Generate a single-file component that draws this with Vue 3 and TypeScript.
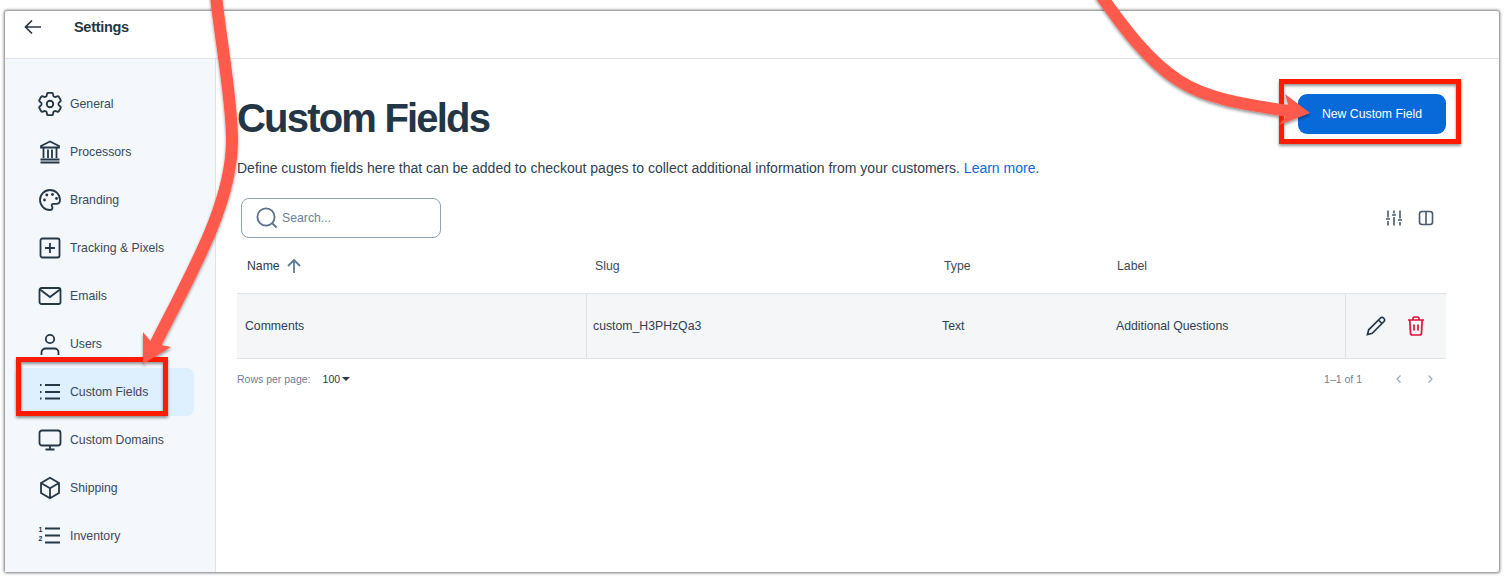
<template>
  <div class="page">
    <div class="window">
      <header class="topbar">
        <svg class="back-icon" viewBox="0 0 24 24" width="24" height="24">
          <path d="M20 12H5M11 5.500 4.500 12l6.500 6.500" />
        </svg>
        <span class="topbar-title">Settings</span>
      </header>

      <div class="body">
        <!-- sidebar -->
        <aside class="sidebar">
          <a
            v-for="item in navItems"
            :key="item.label"
            class="nav-item"
            :class="{ active: item.label === 'Custom Fields' }"
          >
            <svg class="nav-icon" viewBox="0 0 24 24" width="24" height="24" v-html="item.icon"></svg>
            <span>{{ item.label }}</span>
          </a>
        </aside>

        <!-- main -->
        <main class="content">
          <div class="title-row">
            <h1>Custom Fields</h1>
            <button class="primary-btn">New Custom Field</button>
          </div>
          <p class="intro">
            Define custom fields here that can be added to checkout pages to collect additional information from your customers.
            <a class="link">Learn more</a>.
          </p>

          <div class="toolbar">
            <div class="search">
              <svg viewBox="0 0 24 24" width="24" height="24">
                <circle cx="11" cy="11" r="8.600" />
                <path d="m17.500 17.500 4 4" />
              </svg>
              <span>Search...</span>
            </div>
            <div class="tools">
              <svg viewBox="0 0 18 18" width="18" height="18">
                <path d="M3 1.500v7M3 12v4.500M9 1.500v3M9 8v8.500M15 1.500v8M15 13v3.500M1 10h4M7 6h4M13 11h4" />
              </svg>
              <svg viewBox="0 0 18 18" width="18" height="18">
                <rect x="2.500" y="2.500" width="13" height="13" rx="2.500" />
                <path d="M9 2.500v13" />
              </svg>
            </div>
          </div>

          <div class="grid head">
            <div class="th sorted">
              Name
              <svg viewBox="0 0 16 16" width="16" height="16"><path d="M8 15V2M2 8l6-6 6 6" /></svg>
            </div>
            <div class="th slug">Slug</div>
            <div class="th">Type</div>
            <div class="th label">Label</div>
            <div></div>
          </div>

          <div v-for="row in rows" :key="row.slug" class="grid row">
            <div class="td">{{ row.name }}</div>
            <div class="td bordered">{{ row.slug }}</div>
            <div class="td">{{ row.type }}</div>
            <div class="td">{{ row.label }}</div>
            <div class="td actions">
              <svg class="edit" viewBox="0 0 24 24" width="24" height="24">
                <path d="M3.500 20.500 4.700 15.800 16.500 4a2.100 2.100 0 0 1 3 0l.5.5a2.100 2.100 0 0 1 0 3L8.200 19.300l-4.700 1.200ZM14.500 6l3.500 3.500" />
              </svg>
              <svg class="trash" viewBox="0 0 24 24" width="24" height="24">
                <path d="M4 6h16M9 6V4.500A1.500 1.500 0 0 1 10.500 3h3A1.500 1.500 0 0 1 15 4.500V6M5.800 6l.7 13a2 2 0 0 0 2 2h7a2 2 0 0 0 2-2l.7-13M10 10.500v6M14 10.500v6" />
              </svg>
            </div>
          </div>

          <div class="pager">
            <span class="rows-label">Rows per page:</span>
            <span class="rows-value">100</span>
            <span class="caret"></span>
            <span class="range">1–1 of 1</span>
            <svg class="chev first" viewBox="0 0 10 10" width="10" height="10"><path d="M6.500 1.500 3 5l3.500 3.500" /></svg>
            <svg class="chev" viewBox="0 0 10 10" width="10" height="10"><path d="M3.500 1.500 7 5 3.500 8.500" /></svg>
          </div>
        </main>
      </div>
    </div>

    <!-- annotation layer drawn over the screenshot -->
    <svg class="annotations" viewBox="0 0 1504 577" width="1504" height="577">
      <defs>
        <filter id="shade" x="-20%" y="-20%" width="140%" height="140%">
          <feDropShadow dx="0" dy="2" stdDeviation="1.800" flood-color="#000" flood-opacity="0.42" />
        </filter>
      </defs>
      <g filter="url(#shade)">
        <rect class="callout" x="18.500" y="359.500" width="147" height="54" />
        <rect class="callout" x="1281.500" y="81.500" width="177" height="60" />
        <path class="arrow-line" d="M216 -4C222 50 232 100 232 140C232 205 190 275 155 345" />
        <path class="arrow-head" d="M143 364 143 332 152 343 171 347Z" />
        <path class="arrow-line" d="M1100 -6C1125 30 1150 62 1178 80C1205 98 1240 104 1295 112" />
        <path class="arrow-head" d="M1310 113 1279 125 1290 111 1285 94Z" />
      </g>
    </svg>
  </div>
</template>

<script setup lang="ts">
interface NavItem {
  label: string
  icon: string
}

const navItems: NavItem[] = [
  {
    label: 'General',
    icon: '<g transform="translate(12 12) scale(1.25) translate(-12 -12)" stroke-width="1.450"><path d="M9.594 3.940c.09-.542.56-.94 1.110-.94h2.593c.55 0 1.020.398 1.110.94l.213 1.281c.063.374.313.686.645.87.074.04.147.083.22.127.325.196.72.257 1.075.124l1.217-.456a1.125 1.125 0 0 1 1.370.49l1.296 2.247a1.125 1.125 0 0 1-.26 1.431l-1.003.827c-.293.241-.438.613-.43.992a7.723 7.723 0 0 1 0 .255c-.008.378.137.75.43.991l1.004.827c.424.35.534.955.26 1.430l-1.298 2.247a1.125 1.125 0 0 1-1.369.491l-1.217-.456c-.355-.133-.75-.072-1.076.124a6.470 6.470 0 0 1-.22.128c-.331.183-.581.495-.644.869l-.213 1.281c-.09.543-.56.94-1.110.94h-2.594c-.55 0-1.019-.398-1.110-.94l-.213-1.281c-.062-.374-.312-.686-.644-.87a6.520 6.520 0 0 1-.22-.127c-.325-.196-.72-.257-1.076-.124l-1.217.456a1.125 1.125 0 0 1-1.369-.49l-1.297-2.247a1.125 1.125 0 0 1 .26-1.431l1.004-.827c.292-.24.437-.613.43-.991a6.932 6.932 0 0 1 0-.255c.007-.38-.138-.751-.43-.992l-1.004-.827a1.125 1.125 0 0 1-.26-1.430l1.297-2.247a1.125 1.125 0 0 1 1.370-.491l1.216.456c.356.133.751.072 1.076-.124.072-.044.146-.086.22-.128.332-.183.582-.495.644-.869l.214-1.280Z"/><circle cx="12" cy="12" r="2.600"/></g>',
  },
  {
    label: 'Processors',
    icon: '<path d="M12 1.500 3 6v1.500h18V6l-9-4.500ZM5.500 7.500v10.500M18.500 7.500v10.500M10 9.500v8.500M14 9.500v8.500M2.500 19.500h19M2.500 22.500h19"/>',
  },
  {
    label: 'Branding',
    icon: '<path d="M12 2a10 10 0 0 0 0 20c1.600 0 2.500-1 2.500-2.200 0-.7-.3-1.200-.6-1.600-.3-.5-.4-1-.1-1.500.3-.5.900-.8 1.500-.8h3c2.200 0 3.700-1.600 3.700-3.800C22 6.300 17.500 2 12 2Z"/><g class="dots"><circle cx="6.500" cy="12" r="1.400"/><circle cx="8.800" cy="7" r="1.400"/><circle cx="14.500" cy="6.500" r="1.400"/><circle cx="18.500" cy="10.500" r="1.400"/></g>',
  },
  {
    label: 'Tracking & Pixels',
    icon: '<rect x="2.500" y="2.500" width="19" height="19" rx="2"/><path d="M12 7v10M7 12h10"/>',
  },
  {
    label: 'Emails',
    icon: '<rect x="1.500" y="4" width="21" height="16" rx="2"/><path d="m2 5.500 10 7.500 10-7.500"/>',
  },
  {
    label: 'Users',
    icon: '<circle cx="12" cy="7" r="4.200"/><path d="M3.500 23v-2.500a4 4 0 0 1 4-4h9a4 4 0 0 1 4 4V23"/>',
  },
  {
    label: 'Custom Fields',
    icon: '<path d="M7 5h15M7 12h15M7 18.500h15M2 5h1.500M2 12h1.500M2 18.500h1.500"/>',
  },
  {
    label: 'Custom Domains',
    icon: '<rect x="1.500" y="2.500" width="21" height="15" rx="2.500"/><path d="M12 17.500v4M7.500 21.500h9"/>',
  },
  {
    label: 'Shipping',
    icon: '<path d="M12 1.800 21 7v10l-9 5.200L3 17V7l9-5.200ZM3 7l9 5.200L21 7M12 12.200v10"/>',
  },
  {
    label: 'Inventory',
    icon: '<path d="M7 4.500h15M7 11.500h15M7 18.500h15"/><text x="0.500" y="8" class="num">1</text><text x="0.500" y="17" class="num">2</text>',
  },
]

const rows = [
  { name: 'Comments', slug: 'custom_H3PHzQa3', type: 'Text', label: 'Additional Questions' },
]
</script>

<style>
html,
body {
  margin: 0;
  background: #fff;
}
</style>

<style scoped>
.page {
  position: relative;
  width: 1504px;
  height: 577px;
  padding: 11px 5px 5px;
  box-sizing: border-box;
  overflow: hidden;
  background: #fff;
  font-family: "Liberation Sans", Arial, sans-serif;
  color: #2b3b4b;
}

.window {
  height: 100%;
  display: flex;
  flex-direction: column;
  background: #fff;
  border-radius: 2px;
  box-shadow: 0 0 3px 1px rgba(0, 0, 0, 0.55);
}

.topbar {
  flex: 0 0 48px;
  box-sizing: border-box;
  display: flex;
  align-items: flex-start;
  padding: 4px 0 0 16px;
  border-bottom: 1px solid #dfe3e8;
}

.back-icon {
  fill: none;
  stroke: #243746;
  stroke-width: 1.700;
}

.topbar-title {
  margin: 4px 0 0 29px;
  font-size: 14.500px;
  line-height: 17px;
  font-weight: 700;
  letter-spacing: -0.3px;
  color: #243746;
}

.body {
  flex: 1;
  display: flex;
  min-height: 0;
}

.sidebar {
  flex: 0 0 211px;
  box-sizing: border-box;
  padding: 21px 21px 0 9px;
  background: #f4f7fb;
  border-right: 1px solid #dfe3e8;
}

.nav-item {
  display: flex;
  align-items: center;
  height: 48px;
  padding-left: 24px;
  gap: 8px;
  border-radius: 8px;
  font-size: 12.250px;
  color: #3a4a5a;
}

.nav-item.active {
  background: #deeffe;
}

.nav-icon {
  flex: none;
  fill: none;
  stroke: #243746;
  stroke-width: 1.800;
}

.nav-icon :deep(.dots) {
  fill: #243746;
  stroke: none;
}

.nav-icon :deep(.num) {
  fill: #243746;
  stroke: none;
  font-size: 7px;
  font-weight: 700;
}

.content {
  flex: 1;
  padding: 0 53px 0 21px;
  min-width: 0;
}

.title-row {
  display: flex;
  justify-content: space-between;
  align-items: center;
  height: 80px;
  margin-top: 19px;
}

h1 {
  margin: 0;
  font-size: 40px;
  line-height: 48px;
  font-weight: 700;
  letter-spacing: -1.800px;
  color: #233648;
}

.primary-btn {
  width: 148px;
  height: 40px;
  margin-top: -8px;
  border: 0;
  border-radius: 9px;
  background: #0869d9;
  color: #fff;
  font-family: inherit;
  font-size: 12.250px;
}

.intro {
  margin: 0;
  font-size: 14px;
  line-height: 20px;
  color: #2f3f4f;
}

.link {
  color: #0a6bd6;
}

.toolbar {
  display: flex;
  justify-content: space-between;
  align-items: center;
  margin-top: 20px;
  padding-left: 4px;
}

.search {
  width: 200px;
  height: 40px;
  box-sizing: border-box;
  display: flex;
  align-items: center;
  gap: 3px;
  padding: 0 0 1px 13px;
  border: 1px solid #8fa3b3;
  border-radius: 8px;
  font-size: 12.250px;
  color: #6b8196;
}

.search svg {
  fill: none;
  stroke: #587187;
  stroke-width: 1.800;
}

.tools {
  display: flex;
  gap: 14px;
  padding-right: 11px;
}

.tools svg {
  fill: none;
  stroke: #47596a;
  stroke-width: 1.600;
}

.grid {
  display: grid;
  grid-template-columns: 349px 348px 174px 237px 101px;
}

.head {
  height: 55px;
  align-items: center;
}

.th {
  padding-left: 10px;
  font-size: 12.250px;
  color: #3a4a5a;
}

.th.slug,
.th.label {
  padding-left: 9px;
}

.sorted {
  display: flex;
  align-items: center;
  gap: 6px;
  color: #2b3b4b;
}

.sorted svg {
  fill: none;
  stroke: #5f7a90;
  stroke-width: 1.800;
}

.row {
  height: 66px;
  box-sizing: border-box;
  background: #f4f6f8;
  border-top: 1px solid #dfe3e8;
  border-bottom: 1px solid #dfe3e8;
}

.td {
  display: flex;
  align-items: center;
  padding-left: 8px;
  padding-bottom: 1px;
  font-size: 12.250px;
  color: #2f3f4f;
}

.bordered {
  border-left: 1px solid #dfe3e8;
  padding-left: 6px;
}

.actions {
  border-left: 1px solid #dfe3e8;
  padding-left: 18px;
  padding-bottom: 0;
  gap: 16px;
}

.actions svg {
  fill: none;
  stroke-width: 1.700;
}

.edit {
  stroke: #243746;
}

.trash {
  stroke: #e0123f;
}

.pager {
  display: flex;
  align-items: center;
  height: 40px;
  font-size: 10.500px;
  color: #6b8196;
}

.rows-value {
  margin-left: 12px;
  color: #2b3b4b;
}

.caret {
  margin-left: 2px;
  border-left: 4.500px solid transparent;
  border-right: 4.500px solid transparent;
  border-top: 4.500px solid #2b3b4b;
}

.range {
  margin-left: auto;
}

.chev {
  fill: none;
  stroke: #9aabb9;
  stroke-width: 1.200;
  margin-left: 21px;
  margin-right: 11px;
}

.chev.first {
  margin-left: 32px;
  margin-right: 0;
}

.annotations {
  position: absolute;
  left: 0;
  top: 0;
  pointer-events: none;
}

.arrow-line {
  fill: none;
  stroke: #ff5a4c;
  stroke-width: 12;
}

.arrow-head {
  fill: #ff5a4c;
}

.callout {
  fill: none;
  stroke: #ff1a00;
  stroke-width: 5;
}
</style>
